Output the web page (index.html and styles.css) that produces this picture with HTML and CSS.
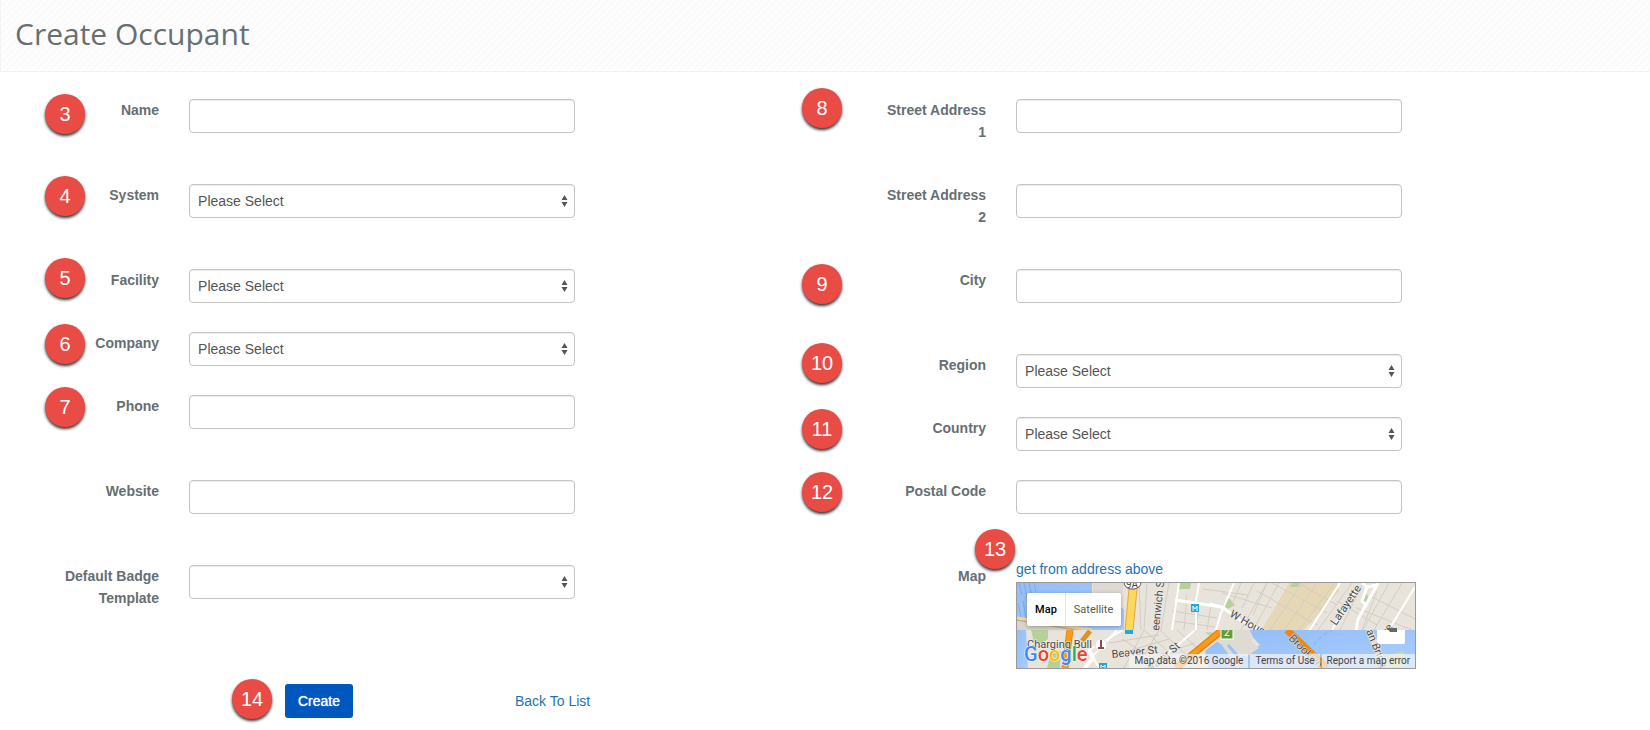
FILE: index.html
```html
<!DOCTYPE html>
<html lang="en">
<head>
    <meta charset="UTF-8">
    <meta name="viewport" content="width=device-width, initial-scale=1.0">
    <title>Create Occupant</title>
    <link rel="stylesheet" href="styles.css">
</head>
<body>
    <header class="page-header">
        <h1>Create Occupant</h1>
    </header>

    <form class="occupant-form">
        <div class="column">
            <div class="row">
                <span class="step step-low">3</span>
                <label for="name">Name</label>
                <input type="text" id="name" name="name">
            </div>
            <div class="row">
                <span class="step">4</span>
                <label for="system">System</label>
                <div class="select">
                    <select id="system" name="system"><option>Please Select</option></select>
                    <svg class="arrows" viewBox="0 0 7 14"><path d="M3.5 1 6.5 6h-6zM.5 8h6l-3 5z"/></svg>
                </div>
            </div>
            <div class="row row-tight">
                <span class="step step-high">5</span>
                <label for="facility">Facility</label>
                <div class="select">
                    <select id="facility" name="facility"><option>Please Select</option></select>
                    <svg class="arrows" viewBox="0 0 7 14"><path d="M3.5 1 6.5 6h-6zM.5 8h6l-3 5z"/></svg>
                </div>
            </div>
            <div class="row row-tight">
                <span class="step">6</span>
                <label for="company">Company</label>
                <div class="select">
                    <select id="company" name="company"><option>Please Select</option></select>
                    <svg class="arrows" viewBox="0 0 7 14"><path d="M3.5 1 6.5 6h-6zM.5 8h6l-3 5z"/></svg>
                </div>
            </div>
            <div class="row">
                <span class="step">7</span>
                <label for="phone">Phone</label>
                <input type="text" id="phone" name="phone">
            </div>
            <div class="row">
                <label for="website">Website</label>
                <input type="text" id="website" name="website">
            </div>
            <div class="row">
                <label for="badge_template">Default Badge Template</label>
                <div class="select">
                    <select id="badge_template" name="badge_template"><option></option></select>
                    <svg class="arrows" viewBox="0 0 7 14"><path d="M3.5 1 6.5 6h-6zM.5 8h6l-3 5z"/></svg>
                </div>
            </div>

            <div class="actions">
                <div class="submit">
                    <span class="step step-low">14</span>
                    <button type="submit" class="btn-create">Create</button>
                </div>
                <a href="#">Back To List</a>
            </div>
        </div>

        <div class="column column-address">
            <div class="row">
                <span class="step step-high">8</span>
                <label for="street1">Street Address 1</label>
                <input type="text" id="street1" name="street1">
            </div>
            <div class="row">
                <label for="street2">Street Address 2</label>
                <input type="text" id="street2" name="street2">
            </div>
            <div class="row">
                <span class="step step-low">9</span>
                <label for="city">City</label>
                <input type="text" id="city" name="city">
            </div>
            <div class="row row-tight">
                <span class="step step-high">10</span>
                <label for="region">Region</label>
                <div class="select">
                    <select id="region" name="region"><option>Please Select</option></select>
                    <svg class="arrows" viewBox="0 0 7 14"><path d="M3.5 1 6.5 6h-6zM.5 8h6l-3 5z"/></svg>
                </div>
            </div>
            <div class="row row-tight">
                <span class="step">11</span>
                <label for="country">Country</label>
                <div class="select">
                    <select id="country" name="country"><option>Please Select</option></select>
                    <svg class="arrows" viewBox="0 0 7 14"><path d="M3.5 1 6.5 6h-6zM.5 8h6l-3 5z"/></svg>
                </div>
            </div>
            <div class="row">
                <span class="step">12</span>
                <label for="postal_code">Postal Code</label>
                <input type="text" id="postal_code" name="postal_code">
            </div>
            <div class="row">
                <span class="step step-map">13</span>
                <span class="label">Map</span>
                <div class="map-field">
                    <a href="#">get from address above</a>
                    <div class="map">
                        <svg class="map-tiles" viewBox="0 0 398 85">
                            <defs>
                                <clipPath id="upper"><rect width="398" height="47"/></clipPath>
                                <clipPath id="lower"><rect y="47" width="398" height="38"/></clipPath>
                                <linearGradient id="water" x1="0" y1="0" x2="1" y2="1">
                                    <stop offset="0" stop-color="#93bdf6"/>
                                    <stop offset="1" stop-color="#a9cdff"/>
                                </linearGradient>
                            </defs>

                            <!-- upper tile -->
                            <g clip-path="url(#upper)">
                                <rect width="398" height="47" fill="#e8e4dc"/>
                                <path d="M0 0H75V10L107 26V47H60L0 38z" fill="url(#water)"/>
                                <path d="M2 0l3 12M7 0l3 14M12 0l3 13M17 0l2 9M1 20l3 14M6 18l3 17" stroke="#7fa9e6" fill="none"/>
                                <path d="M0 38L60 47H0z" fill="#d9d4ca"/>
                                <path d="M0 35L75 47" stroke="#f3d79c" stroke-width="3"/>
                                <path d="M0 37L70 49" stroke="#c9a76a" stroke-width="1"/>
                                <path d="M76 0h30v10H76z" fill="#dedad3"/>
                                <path d="M162 0h12l-1 6h-11zM206 22l6-7 6 7-7 4z" fill="#b5d29a"/>
                                <path d="M272 0h48l2 8-37 41h-42l13-21z" fill="#e6d7b5"/>
                                <path d="M275 0h8l-2 4h-8zM345 14l5-3 2 7-5 4z" fill="#b5d29a"/>
                                <g stroke="#d3cdc4" stroke-width="1" fill="none">
                                    <path d="M122 0l2 47M130 0l-3 47M152 0l-8 47M155 28l45 7M156 38l42 6M170 12l-3 35M182 20l-3 27M194 22l-4 25M186 6l45 6M215 22l9-22M225 25l12-25M236 32l14-32M205 10l50 15"/>
                                    <path d="M250 0l-26 47M262 0l-26 47M285 0l-32 47M300 0l-33 47M318 0l-36 47M240 8l60 34M255 0l55 30M285 2l35 20M335 0l-34 47M345 2l-22 45M360 8l-15 39M372 0l-26 47M385 0l-28 47M340 25l55 22M355 14l43 22M320 18l40 24"/>
                                </g>
                                <g stroke="#fff" fill="none">
                                    <path d="M162 0l-7 47M182 0l-3 18v29M217 0l-13 30-6 20" stroke-width="2"/>
                                    <path d="M158 17l47 7 18 13 25 12" stroke-width="3"/>
                                    <path d="M193 21l14 4" stroke-width="3"/>
                                    <path d="M323 0l-31 48M398 4l-27 44M340 5l-25 42" stroke-width="2"/>
                                    <path d="M361 0l-20 36-2 12M345 0l5 4 11-2M350 4l-5 14 5 5" stroke-width="3"/>
                                </g>
                                <path d="M116 6l-4 42" stroke="#e2a93f" stroke-width="9"/>
                                <path d="M116 6l-4 42" stroke="#ffd75b" stroke-width="7"/>
                                <rect x="107" y="-8" width="17" height="14" rx="7" fill="#fff" stroke="#555"/>
                                <text x="109" y="5" class="shield">9A</text>
                                <text class="street" transform="translate(142 48) rotate(-84)">eenwich St</text>
                                <text class="street" transform="translate(212 33) rotate(30)">W Houston</text>
                                <text class="street" transform="translate(319 43) rotate(-56)">Lafayette</text>
                                <text class="street" transform="translate(371 52) rotate(-56)">re</text>
                            </g>

                            <!-- lower tile -->
                            <g clip-path="url(#lower)">
                                <rect y="47" width="398" height="38" fill="#e8e4dc"/>
                                <path d="M0 47h9l2 38H0z" fill="url(#water)"/>
                                <path d="M14 47h17v9l-8 5-6-2zM34 70l10-2-1 17H30z" fill="#b5d29a"/>
                                <path d="M229 47H398V85H192l-4-17 18-14 18 20 19-12z" fill="url(#water)"/>
                                <path d="M195 55l20-8h18l3 7-2 4 8 7-13 9-7-4-10-9-2 2 15 18-5 3-15-22z" fill="#e0dbd2"/>
                                <path d="M375 71l12-3v16h-30l5-6z" fill="#c3dda6"/>
                                <path d="M188 49h7l8 6-5 3z" fill="#c3d8ae"/>
                                <path d="M293 68q8-14 22-21" stroke="#83aef0" stroke-dasharray="4 3" fill="none"/>
                                <g stroke="#d0cac1" fill="none">
                                    <path d="M92 60l50-8M107 85l20-38M120 85l22-38M127 47l42 38M143 47l36 34M105 56l45 29M160 47l25 22M98 72l54-16M118 80l60-20"/>
                                </g>
                                <g stroke="#fff" fill="none">
                                    <path d="M178 47l-46 40M82 85l-10-18 34-20M100 47L74 75" stroke-width="2"/>
                                    <path d="M68 85l8-10-4-8" stroke-width="4"/>
                                </g>
                                <path d="M53 47l-5 38" stroke="#e6850d" stroke-width="7"/>
                                <path d="M53 47l-5 38" stroke="#ff9c1b" stroke-width="5"/>
                                <path d="M65 58l8-10" stroke="#d7952b" stroke-width="5"/>
                                <path d="M204 48l-45 37" stroke="#da7805" stroke-width="7"/>
                                <path d="M204 48l-45 37" stroke="#ff9818" stroke-width="5"/>
                                <path d="M270 47l40 38" stroke="#ee870d" stroke-width="7"/>
                                <path d="M352 47l16 38" stroke="#e4dfd6" stroke-width="7"/>
                                <rect x="108" y="44" width="8" height="7" fill="#1da7e8"/>
                                <rect x="204" y="43" width="12" height="13" fill="#5c9e3c" stroke="#fff"/>
                                <text x="207" y="53" class="marker">2</text>
                                <text class="street" transform="translate(95 75) rotate(-6)">Beaver St</text>
                                <text class="street" transform="translate(132 91) rotate(-40)">Water St</text>
                                <text class="street" transform="translate(271 56) rotate(44)">Brooklyn</text>
                                <text class="street" transform="translate(349 48) rotate(68)">an Bridge</text>
                                <rect x="360" y="40" width="28" height="21" rx="2" fill="#fff"/>
                            </g>
                            <path d="M370 45h10v4h-7z" fill="#666"/>

                            <!-- subway stops and the Charging Bull pin -->
                            <rect x="174" y="21" width="8" height="8" fill="#1da7e8"/>
                            <path d="M176 28v-5l2 3 2-3v5" stroke="#fff" fill="none"/>
                            <rect x="82" y="80" width="8" height="5" fill="#1da7e8"/>
                            <path d="M84 85v-3l2 2 2-2v3" stroke="#fff" fill="none"/>
                            <circle cx="84" cy="62" r="6" fill="#fff" stroke="#ddd"/>
                            <path d="M84 57v7" stroke="#7d5148" stroke-width="2"/>
                            <path d="M81 64h6v2h-6z" fill="#7d5148"/>
                            <text class="place" x="10" y="65">Charging Bull</text>

                            <text class="google" x="7" y="78"><tspan fill="#4285f4">G</tspan><tspan fill="#ea4335">o</tspan><tspan fill="#fbbc05">o</tspan><tspan fill="#4285f4">g</tspan><tspan fill="#34a853">l</tspan><tspan fill="#ea4335">e</tspan></text>
                        </svg>
                        <div class="map-type">
                            <button type="button" class="active">Map</button>
                            <button type="button">Satellite</button>
                        </div>
                        <div class="map-credits">
                            <span>Map data ©2016 Google</span>
                            <a href="#">Terms of Use</a>
                            <a href="#">Report a map error</a>
                        </div>
                    </div>
                </div>
            </div>
        </div>
    </form>
</body>
</html>
```
FILE: styles.css
```css
* {
    box-sizing: border-box;
}

body {
    margin: 0;
    background-color: #fff;
    color: #666f73;
    font-family: "Liberation Sans", Arial, sans-serif;
    font-size: 14px;
    line-height: 22px;
}

a {
    color: #1f72b0;
    text-decoration: none;
}

/* Header */
.page-header {
    padding: 14px 14px 17px;
    border-left: 1px solid #f3f3f3;
    border-bottom: 1px solid #f2f2f2;
    background: repeating-linear-gradient(135deg, #fdfdfd 0, #fdfdfd 3px, #fafafa 3px, #fafafa 5px);
}

h1 {
    margin: 0;
    font-family: "Open Sans", sans-serif;
    font-size: 30px;
    font-weight: 400;
    line-height: 40px;
}

/* Form */
.occupant-form {
    display: grid;
    grid-template-columns: 1fr 1fr;
    column-gap: 55px;
    padding: 27px 0 12px 51px;
}

.row {
    display: grid;
    grid-template-columns: 14% 50%;
    column-gap: 30px;
    align-items: start;
    position: relative;
    min-height: 85px;
}

.row-tight {
    min-height: 63px;
}

label,
.label {
    font-weight: bold;
    text-align: right;
}

input,
select {
    display: block;
    width: 100%;
    height: 34px;
    padding: 6px 8px;
    border: 1px solid #c4c4c4;
    border-radius: 4px;
    background-color: #fff;
    box-shadow: inset 0 1px 1px rgba(0, 0, 0, 0.08);
    color: #555;
    font-family: inherit;
    font-size: 14px;
}

.select {
    position: relative;
}

select {
    appearance: none;
}

.arrows {
    position: absolute;
    top: 10px;
    right: 7px;
    width: 7px;
    height: 14px;
    fill: #555;
    pointer-events: none;
}

/* Numbered steps */
.step {
    position: absolute;
    top: -8px;
    left: -6px;
    z-index: 1;
    width: 40px;
    height: 40px;
    border-radius: 50%;
    background-color: #e94b45;
    box-shadow: 0 2px 3px rgba(0, 0, 0, 0.8);
    color: #fff;
    font-size: 20px;
    line-height: 40px;
    text-align: center;
}

.step-low {
    top: -5px;
}

.step-high {
    top: -11px;
}

.column-address .step {
    left: -76px;
}

.column-address .step-map {
    top: -36px;
    left: 97px;
}

/* Map */
.map-field {
    width: 400px;
    margin-top: -7px;
}

.map {
    position: relative;
    margin-top: 2px;
    border: 1px solid #999;
    overflow: hidden;
    font-family: Roboto, sans-serif;
}

.map-tiles {
    display: block;
    width: 100%;
}

.street,
.place {
    fill: #4a4a4a;
    stroke: #f3f0ea;
    stroke-width: 1px;
    paint-order: stroke;
    font-size: 11px;
}

.shield {
    fill: #444;
    font-size: 10px;
}

.marker {
    fill: #fff;
    font-size: 10px;
}

.google {
    stroke: #fff;
    stroke-width: 1px;
    paint-order: stroke;
    font-size: 20px;
    font-weight: 500;
}

.map-type {
    display: flex;
    position: absolute;
    top: 10px;
    left: 10px;
    border-radius: 2px;
    background-color: #fff;
    box-shadow: 0 1px 4px rgba(0, 0, 0, 0.3);
}

.map-type button {
    height: 33px;
    padding: 0 8px;
    border: none;
    background: none;
    color: #565656;
    font-family: inherit;
    font-size: 11px;
    cursor: pointer;
}

.map-type .active {
    border-right: 1px solid #e6e6e6;
    color: #000;
    font-weight: 500;
}

.map-credits {
    display: flex;
    gap: 2px;
    position: absolute;
    right: 0;
    bottom: 0;
    font-size: 10px;
    line-height: 14px;
}

.map-credits span,
.map-credits a {
    padding: 0 5px;
    background-color: rgba(245, 245, 245, 0.7);
    color: #444;
}

/* Actions */
.actions {
    display: flex;
    align-items: center;
    gap: 162px;
    margin-top: 34px;
    padding-left: 234px;
}

.submit {
    position: relative;
}

.submit .step {
    left: -53px;
}

.btn-create {
    display: block;
    width: 68px;
    height: 34px;
    padding: 0;
    border: none;
    border-radius: 3px;
    background-color: #0057be;
    color: #fff;
    font-family: inherit;
    font-size: 14px;
    text-shadow: 0 0 1px #fff;
    cursor: pointer;
}
```
